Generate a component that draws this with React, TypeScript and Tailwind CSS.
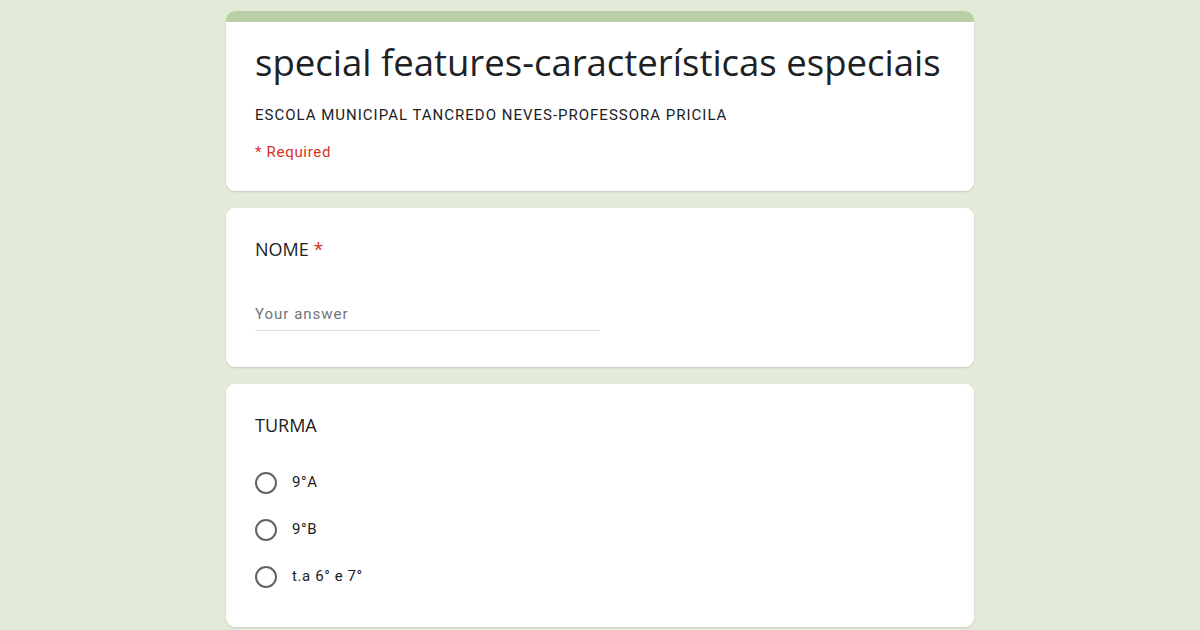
import React from "react";

function Radio({ label }: { label: string }) {
  return (
    <div className="flex items-center h-[47px]">
      <div className="w-[22px] h-[22px] rounded-full border-2 border-[#5f6368] box-border" />
      <span className="ml-[15px] text-[15px] tracking-[0.6px] text-[#202124]">{label}</span>
    </div>
  );
}

export default function App() {
  return (
    <div
      className="w-[1200px] h-[630px] overflow-hidden bg-[#e2ead8] flex flex-col items-center pt-[11px] gap-[17px]"
      style={{ fontFamily: "Roboto, 'Liberation Sans', sans-serif" }}
    >
      <div className="w-[748px] h-[180px] bg-white rounded-[9px] overflow-hidden shadow-[0_1px_2px_rgba(0,0,0,0.12)] shrink-0">
        <div className="h-[11px] bg-[#b8cfa6]" />
        <div className="px-[29px] pt-[16px]">
          <div
            className="text-[36.5px] leading-[48px] text-[#202124] whitespace-nowrap"
            style={{ fontFamily: "'Open Sans', sans-serif" }}
          >
            special features-características especiais
          </div>
          <div className="mt-[19px] text-[15px] leading-[20px] tracking-[1px] text-[#202124] whitespace-nowrap">
            ESCOLA MUNICIPAL TANCREDO NEVES-PROFESSORA PRICILA
          </div>
          <div className="mt-[17px] text-[15px] leading-[20px] tracking-[0.7px] text-[#d93025]">* Required</div>
        </div>
      </div>

      <div className="w-[748px] h-[159px] bg-white rounded-[9px] shadow-[0_1px_2px_rgba(0,0,0,0.12)] px-[29px] pt-[29px] shrink-0">
        <div className="text-[18px] leading-[24px] text-[#202124]" style={{ fontFamily: "'Open Sans', sans-serif" }}>
          NOME <span className="text-[#d93025]">*</span>
        </div>
        <div className="mt-[43px] w-[345px] border-b border-[#dadce0] pb-[6px] text-[15px] leading-[20px] tracking-[1px] text-[#70757a]">
          Your answer
        </div>
      </div>

      <div className="w-[748px] h-[243px] bg-white rounded-[9px] shadow-[0_1px_2px_rgba(0,0,0,0.12)] px-[29px] pt-[29px] shrink-0">
        <div className="text-[18px] leading-[24px] text-[#202124]" style={{ fontFamily: "'Open Sans', sans-serif" }}>
          TURMA
        </div>
        <div className="mt-[22px] flex flex-col">
          <Radio label="9°A" />
          <Radio label="9°B" />
          <Radio label="t.a 6° e 7°" />
        </div>
      </div>
    </div>
  );
}
